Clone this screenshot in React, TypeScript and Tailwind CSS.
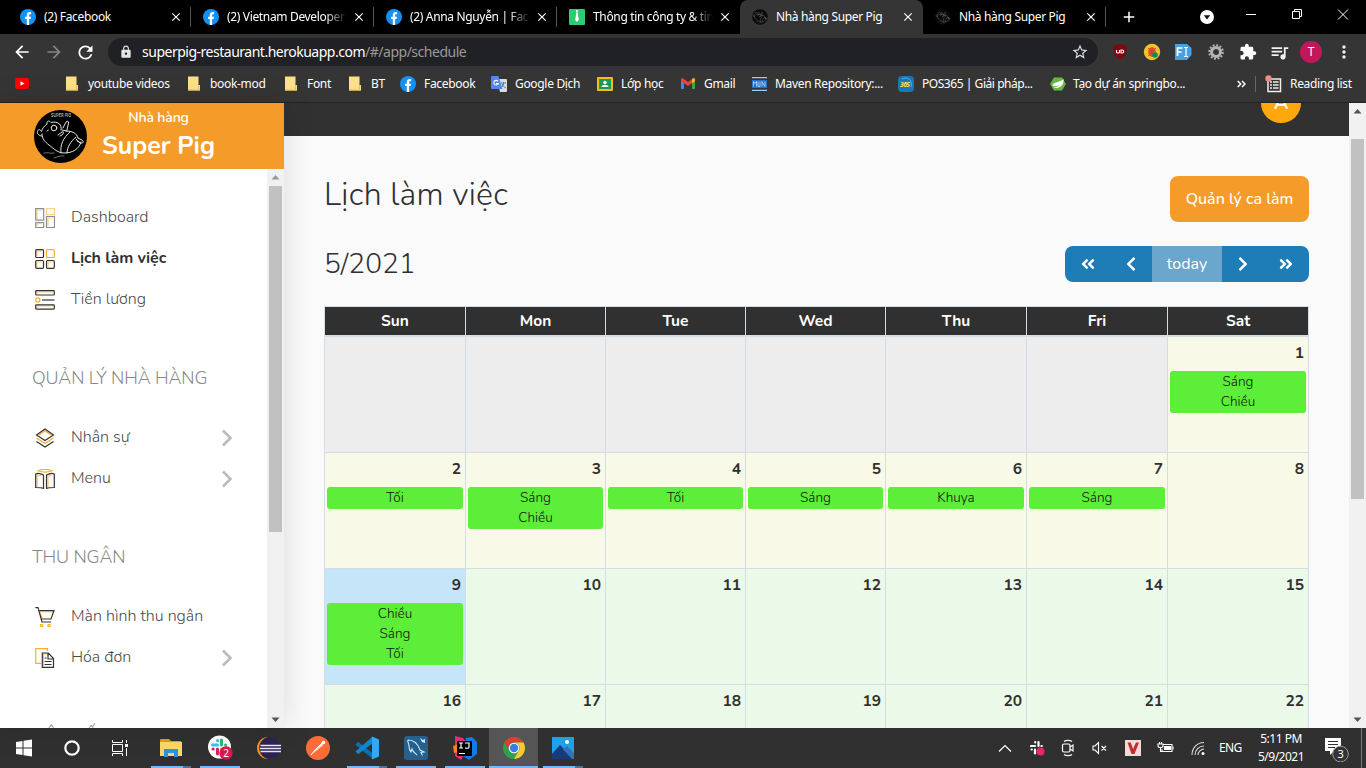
import React from "react";
import { FaAngleDoubleLeft, FaAngleDoubleRight, FaChevronLeft, FaChevronRight } from "react-icons/fa";
import { MdLock, MdOutlineStarBorder, MdArrowBack, MdArrowForward, MdRefresh, MdQueueMusic, MdMoreVert, MdClose, MdAdd, MdExtension } from "react-icons/md";

const Facebook = () => (
  <svg width="16" height="16" viewBox="0 0 16 16" className="shrink-0">
    <circle cx="8" cy="8" r="8" fill="#1491f4" />
    <path d="M6.8 16V10H5V7.7h1.8V6.1c0-2 1.1-3 2.8-3 .7 0 1.5.1 1.5.1v2h-.9c-.9 0-1.1.5-1.1 1.1v1.4H11L10.700 10H9.100v6z" fill="#fff" />
  </svg>
);

const PigLines = ({ stroke }: { stroke: string }) => (
  <g fill="none" stroke={stroke} strokeWidth="1" strokeLinecap="round" strokeLinejoin="round">
    <path d="M8 26c-3 0-5-2-4.500-4.500S6 19 7.500 21.500c.5-3 3-5.500 5.500-7.500-.5-3 2-4 4-1.500 3-.8 6-.5 8.500 1.500 1.500 1.500 2 3.500 1.500 6" />
    <path d="M8 24c0 5 3 8 7 11 5 4 9 8 15 8 9 0 15-4 17-11" />
    <path d="M32 21c6 0 11 2 12 7M44 28l4 2c2 1 1 4-1 3l-4-2M42 29l4 4" />
    <circle cx="20" cy="18" r="2.800" />
    <path d="M13 21l1.500-1M29 18l3-6c1-1 3-1 2.500 1L33 20M24 25l4-3c2-1 2 1 0 3l-2 1M28 20l5 1" />
    <path d="M27 43c-1-8 2-15 9-21M33 43c0-6 4-12 9-16" />
    <path d="M10 43c4-1 7 1 10 0M20 48c4-1 6-3 10-2" strokeWidth=".5" />
  </g>
);

const PigFav = () => (
  <svg width="16" height="16" viewBox="0 0 53 53" className="shrink-0">
    <circle cx="26.500" cy="26.500" r="26" fill="#0a0a0a" />
    <PigLines stroke="#999" />
  </svg>
);

const Tie = () => (
  <svg width="16" height="16" viewBox="0 0 16 16" className="shrink-0">
    <rect width="16" height="16" rx="1" fill="#2dcc70" />
    <path d="M7 1h2l-.4 2.200L9.800 11 8 13 6.200 11l1.200-7.800z" fill="#fff" />
  </svg>
);

const tabs = [
  { title: "(2) Facebook", icon: <Facebook /> },
  { title: "(2) Vietnam Developer", icon: <Facebook />, fade: true },
  { title: "(2) Anna Nguyễn | Face", icon: <Facebook />, fade: true },
  { title: "Thông tin công ty & tin", icon: <Tie />, fade: true },
  { title: "Nhà hàng Super Pig", icon: <PigFav />, active: true },
  { title: "Nhà hàng Super Pig", icon: <PigFav /> },
];

function TabStrip() {
  return (
    <div className="flex h-[34px] bg-black pl-2 text-white">
      {tabs.map((t, i) => (
        <div key={i} className={`relative flex h-[34px] w-[183px] shrink-0 items-center pl-3 ${t.active ? "rounded-t-lg bg-[#353535]" : ""}`}>
          {t.icon}
          <div className={`ml-2 w-[120px] overflow-hidden whitespace-nowrap text-[12px] tracking-[-0.34px] ${t.fade ? "[mask-image:linear-gradient(to_right,black_82%,transparent)]" : ""}`}>{t.title}</div>
          <MdClose size={14} className="ml-[5px] shrink-0" />
          {!t.active && i !== 3 && <div className="absolute right-0 top-[7px] h-[20px] w-px bg-[#555]" />}
        </div>
      ))}
      <div className="flex w-[45px] items-center justify-center"><MdAdd size={18} /></div>
      <div className="ml-[48px] flex items-center">
        <svg width="16" height="16" viewBox="0 0 16 16"><circle cx="8" cy="8" r="7" fill="#fff" /><path d="M4.800 6.200h6.400L8 10.500z" fill="#111" /></svg>
      </div>
      <svg width="148" height="34" viewBox="0 0 148 34" fill="none" stroke="#fff">
        <path d="M31 14.500h10M123 9.500l10 10M133 9.500l-10 10" />
        <path d="M77.500 11.500h7v7h-7zM79.500 11.500v-2h7v7h-2" />
      </svg>
    </div>
  );
}

const Extensions = () => (
  <div className="flex items-center">
    <svg width="16" height="18" viewBox="0 0 16 18"><path d="M8 1l6.500 2c0 7-.5 10-6.500 14C2 13 1.500 10 1.500 3z" fill="#800610" /><path d="M4.500 7v2c0 1.300 3 1.300 3 0V7m1.500 0v3h1.200a1.500 1.500 0 000-3z" fill="none" stroke="#fff" strokeWidth="1.100" /></svg>
    <svg width="18" height="18" viewBox="0 0 18 18" className="ml-[15px]"><circle cx="9" cy="9" r="8.200" fill="#f5c22b" /><ellipse cx="9" cy="9" rx="3.800" ry="4.800" fill="#e2502c" /><path d="M5 5l8 8M13 5l-8 8M9 4v9" stroke="#c4452a" strokeWidth=".8" /><circle cx="12" cy="12" r="2.800" fill="#0b8a5b" /></svg>
    <svg width="17" height="18" viewBox="0 0 17 18" className="ml-[14px]"><path d="M0 1h12l4.500 4v7L12 17H0z" fill="#45a1e0" /><path d="M2.500 13V5h5M2.500 9h4" fill="none" stroke="#fff" strokeWidth="1.700" /><path d="M9 4.500h4M11 4.500v9M9 13.500h4" fill="none" stroke="#fff" strokeWidth="1.200" /></svg>
    <svg width="18" height="18" viewBox="0 0 18 18" className="ml-[15px]" fill="none" stroke="#b5b5b5"><circle cx="9" cy="9" r="4.500" strokeWidth="3" /><circle cx="9" cy="9" r="6.800" strokeWidth="2" strokeDasharray="1.900 1.660" /></svg>
    <MdExtension size={18} className="ml-[14px] text-white" />
    <MdQueueMusic size={21} className="ml-[12px] text-[#f1f1f1]" />
    <div className="ml-[10px] flex size-[22px] items-center justify-center rounded-full bg-[#c2185b] text-[12px] text-white">T</div>
    <MdMoreVert size={20} className="ml-[12px] text-[#f1f1f1]" />
  </div>
);

function Toolbar() {
  return (
    <div className="flex h-[36px] items-center bg-[#353535] pl-[12px] text-white">
      <MdArrowBack size={20} />
      <MdArrowForward size={20} className="ml-[12px] text-[#858585]" />
      <MdRefresh size={21} className="ml-[11px]" />
      <div className="ml-[12px] flex h-[28px] w-[990px] items-center rounded-full bg-[#202124] pl-[11px] pr-[9px]">
        <MdLock size={14} className="text-[#e6e6e6]" />
        <div className="ml-[9px] pb-px text-[14px] tracking-[-0.49px]">superpig-restaurant.herokuapp.com<span className="text-[#9a9a9a]">/#/app/schedule</span></div>
        <MdOutlineStarBorder size={18} className="ml-auto text-[#ddd]" />
      </div>
      <div className="ml-[14px]"><Extensions /></div>
    </div>
  );
}

const Folder = () => (
  <svg width="12" height="15" viewBox="0 0 12 15" className="mr-[10px] shrink-0"><path d="M0 .5h10.500V9H12v5.500H0z" fill="#ffe08a" /><path d="M10.500 9v5.500M0 14h12" stroke="#e8c258" fill="none" /></svg>
);

const bookmarks: { w: string; label: string; icon: React.ReactNode }[] = [
  { w: "w-[51px]", label: "", icon: <svg width="14" height="11" viewBox="0 0 14 11"><rect width="14" height="11" rx="2" fill="#f00" /><path d="M5.500 3.200l4 2.300-4 2.300z" fill="#fff" /></svg> },
  { w: "w-[122px]", label: "youtube videos", icon: <Folder /> },
  { w: "w-[97px]", label: "book-mod", icon: <Folder /> },
  { w: "w-[64px]", label: "Font", icon: <Folder /> },
  { w: "w-[51px]", label: "BT", icon: <Folder /> },
  { w: "w-[91px]", label: "Facebook", icon: <div className="mr-2"><Facebook /></div> },
  { w: "w-[106px]", label: "Google Dịch", icon: <svg width="16" height="16" viewBox="0 0 16 16" className="mr-2 shrink-0"><path d="M6 3h9a1 1 0 011 1v11a1 1 0 01-1 1H9z" fill="#dadce0" /><path d="M10 7h5M12.500 6v1c0 3-1 4-3 5M11 8c1 2 2 3 4 4" stroke="#5f7d9c" fill="none" /><path d="M1 0h6.500l4 13H1a1 1 0 01-1-1V1a1 1 0 011-1z" fill="#4f87ee" /><path d="M7 5.300A2.300 2.300 0 107.300 7.500H5" stroke="#fff" fill="none" strokeWidth="1.100" /></svg> },
  { w: "w-[84px]", label: "Lớp học", icon: <svg width="16" height="14" viewBox="0 0 16 14" className="mr-2 shrink-0"><rect width="16" height="14" rx="1" fill="#f8bc16" /><rect x="2" y="2" width="12" height="10" fill="#179b55" /><circle cx="8" cy="5.500" r="1.700" fill="#fff" /><path d="M4.500 10c0-3 7-3 7 0z" fill="#fff" /></svg> },
  { w: "w-[71px]", label: "Gmail", icon: <svg width="14" height="11" viewBox="0 0 14 11" className="mr-[9px] shrink-0"><path d="M0 1h3v10H1a1 1 0 01-1-1z" fill="#4285f4" /><path d="M11 1h3v9a1 1 0 01-1 1h-2z" fill="#34a853" /><path d="M0 1.500C0 0 1.500 0 2.500.7L7 4 11.500.700C12.500 0 14 0 14 1.500V3L7 8 0 3z" fill="#ea4335" /><path d="M11 1c1.500-1.500 3-.8 3 .5V3l-3 2.200z" fill="#fbbc04" /></svg> },
  { w: "w-[146px]", label: "Maven Repository:...", icon: <svg width="15" height="14" viewBox="0 0 15 14" className="mr-2 shrink-0"><path d="M0 .7h15M0 13.300h15" stroke="#9cc8f5" strokeWidth="1.300" /><rect y="3" width="15" height="8" fill="#236fc9" /><path d="M1.500 9.500v-5l1.500 2 1.500-2v5M6 4.500v5h2v-5M10 9.500v-5l3 5v-5" fill="none" stroke="#bfe0ff" strokeWidth=".8" /></svg> },
  { w: "w-[152px] tracking-[-0.45px]", label: "POS365 | Giải pháp...", icon: <svg width="16" height="16" viewBox="0 0 16 16" className="mr-2 shrink-0"><rect width="16" height="16" rx="4" fill="#1877b8" /><path d="M4 3c5-3 11 1 9 8" stroke="#5bb0e4" fill="none" /><text x="2" y="10.500" fontSize="6.500" fontStyle="italic" fontWeight="700" fill="#ffe04a">365</text></svg> },
  { w: "w-[187px]", label: "Tạo dự án springbo...", icon: <svg width="16" height="16" viewBox="0 0 16 16" className="mr-[7px] shrink-0"><path d="M4 1.500h8l4 6.500-4 6.500H4L0 8z" fill="#66b840" /><path d="M2.500 10C3 5 10 7 13.500 3c.5 7-4 10-10 8.500C7 11 9.500 10 11 8c-2.500 2-5 2.500-8.500 2z" fill="#fff" /></svg> },
];

function Bookmarks() {
  return (
    <div className="flex h-[33px] items-center border-b border-[#222] bg-[#353535] pb-[5px] pl-[15px] text-[12px] tracking-[-0.32px] text-white">
      {bookmarks.map((b, i) => (
        <div key={i} className={`flex shrink-0 items-center whitespace-nowrap ${b.w}`}>{b.icon}{b.label}</div>
      ))}
      <svg width="9" height="8" viewBox="0 0 9 8" fill="none" stroke="#fff" strokeWidth="1.500"><path d="M.7 1l3 3-3 3M5 1l3 3-3 3" /></svg>
      <div className="ml-[9px] h-4 w-px bg-[#666]" />
      <svg width="18" height="18" viewBox="0 0 18 18" className="ml-[9px] shrink-0"><path d="M3 4h12.500v12.500H3z" fill="none" stroke="#eee" strokeWidth="1.500" /><path d="M5 7h2m1 0h5.500M5 10h2m1 0h5.500M5 13h2m1 0h5.500" stroke="#eee" strokeWidth="1.500" /><circle cx="3.500" cy="3.500" r="3.200" fill="#f28b82" /></svg>
      <span className="ml-[7px] whitespace-nowrap">Reading list</span>
    </div>
  );
}

const Y = "#f9ae2b";
const D = "#333";
const navIcons: Record<string, React.ReactNode> = {
  dashboard: <g opacity=".55"><path d="M2 11V2h5M2 18v-2.300h5M13 18V10h5" stroke={Y} /><path d="M.7.700h8v11.500h-8zM.7 14.500h8v5h-8zM11.500 8.500h8v11h-8z" stroke={D} /><path d="M11.500.700h8v6h-8z" stroke={Y} /></g>,
  schedule: <><path d="M2 7V2h5M2 18v-5h5M13 18v-5h5" stroke={Y} opacity=".6" /><rect x=".7" y=".7" width="7.800" height="7.800" rx="1" stroke={D} /><rect x="11.500" y=".7" width="7.800" height="7.800" rx="1" stroke={Y} /><rect x=".7" y="11.500" width="7.800" height="7.800" rx="1" stroke={D} /><rect x="11.500" y="11.500" width="7.800" height="7.800" rx="1" stroke={D} /></>,
  salary: <><path d="M2 4V2h16M2 18v-2h16" stroke={Y} opacity=".6" /><rect x=".7" y=".7" width="18.600" height="4.300" rx=".8" stroke={D} /><rect x=".7" y="14.800" width="18.600" height="4.300" rx=".8" stroke={D} /><circle cx="2.800" cy="10" r="2.100" stroke={Y} /><path d="M7 10h12.500" stroke={D} /></>,
  people: <><path d="M4 7l6-4.200L16 7" stroke={Y} /><path d="M10 1l8.500 6L10 12.500 1.500 7z" stroke={D} /><path d="M1.500 10l8.500 5.500 8.500-5.500" stroke={Y} /><path d="M1.500 13.500L10 19l8.500-5.500" stroke={D} /></>,
  menu: <><path d="M2.200 18V6l4 1M13 18V7l4-1" stroke={Y} opacity=".7" /><path d="M.7 5c2-1 5-.5 7.800 1v13.500c-2-1-5-1-7.800-1zM19.300 5c-2-1-5-.5-7.800 1v13.500c2-1 5-1 7.800-1z" stroke={D} /><path d="M3 1.800c4-1.600 10-1.600 14 0-4 1.400-10 1.400-14 0z" stroke={Y} /></>,
  cart: <><path d="M4.500 4.700h13.500M5 6l2 5" stroke={Y} /><path d="M.3.700H3L7 15h9M4 3.500h15L16 12H6.200" stroke={D} /><circle cx="6.500" cy="18.500" r="1.200" stroke={Y} /><circle cx="14" cy="18.500" r="1.200" stroke={Y} /></>,
  bill: <><path d="M12.500 3V.700H.700v14.600H6" stroke={Y} /><path d="M8.500 18V6H12" stroke={Y} opacity=".7" /><path d="M7.300 5h6l5.200 5.500v8.800H7.300zM13 5v6h5.500M9.500 10h2M9.500 13.500h7M9.500 16.500h7" stroke={D} /></>,
};

function NavItem({ icon, label, bold, arrow }: { icon: string; label: string; bold?: boolean; arrow?: boolean }) {
  return (
    <div className="flex h-[41px] shrink-0 items-center pl-[35px] pr-[34px]">
      <svg width="20" height="20" viewBox="0 0 20 20" fill="none" strokeWidth="1.200" className="mt-[2px] shrink-0">{navIcons[icon]}</svg>
      <span className={`ml-4 text-[16px] whitespace-nowrap ${bold ? "font-bold text-[#303030]" : "font-light text-[#4a4a4a]"}`}>{label}</span>
      {arrow && <svg width="12" height="18" viewBox="0 0 12 18" className="ml-auto mt-[2px]" fill="none" stroke="#bbb" strokeWidth="2.600"><path d="M2 1.500L9.500 9 2 16.500" /></svg>}
    </div>
  );
}

const Heading = ({ children }: { children: React.ReactNode }) => (
  <div className="flex h-[38px] shrink-0 items-center pl-8 pt-[2px] text-[18px] font-light tracking-[-0.12px] text-[#888]">{children}</div>
);

function ScrollBar({ side }: { side?: boolean }) {
  return (
    <div className="flex w-[17px] shrink-0 flex-col items-center bg-[#f1f1f1]">
      <svg width="17" height="17" viewBox="0 0 17 17"><path d="M4.500 10.500h8l-4-4.500z" fill={side ? "#999" : "#555"} /></svg>
      <div className={`w-[13px] bg-[#c1c1c1] ${side ? "h-[346px]" : "mt-[19px] h-[360px]"}`} />
      <svg width="17" height="17" viewBox="0 0 17 17" className="mt-auto"><path d="M4.500 6.500h8l-4 4.500z" fill="#555" /></svg>
    </div>
  );
}

function Sidebar() {
  return (
    <div className="z-10 flex w-[284px] shrink-0 flex-col bg-white font-['Nunito','Lato',sans-serif] shadow-[0_0_30px_rgba(0,0,0,0.13)]">
      <div className="flex h-[66px] shrink-0 items-center bg-[#f49b29] pl-[34px]">
        <svg width="53" height="53" viewBox="0 0 53 53">
          <circle cx="26.500" cy="26.500" r="26.500" fill="#000" />
          <PigLines stroke="#e5e5e5" />
          <text x="17" y="7.300" fontSize="4.800" fontWeight="700" fill="#bbb" textLength="20" lengthAdjust="spacingAndGlyphs">SUPER PIG</text>
        </svg>
        <div className="ml-[15px] flex w-[113px] flex-col items-center whitespace-nowrap text-white">
          <div className="-mt-px text-[14px] font-semibold leading-[20px] tracking-[-0.15px]">Nhà hàng</div>
          <div className="mt-px text-[25px] font-bold leading-[34px]">Super Pig</div>
        </div>
      </div>
      <div className="flex min-h-0 flex-1">
        <div className="flex flex-1 flex-col overflow-hidden pt-[27px]">
          <NavItem icon="dashboard" label="Dashboard" />
          <NavItem icon="schedule" label="Lịch làm việc" bold />
          <NavItem icon="salary" label="Tiền lương" />
          <div className="h-[39px] shrink-0" />
          <Heading>QUẢN LÝ NHÀ HÀNG</Heading>
          <div className="h-[20px] shrink-0" />
          <NavItem icon="people" label="Nhân sự" arrow />
          <NavItem icon="menu" label="Menu" arrow />
          <div className="h-[39px] shrink-0" />
          <Heading>THU NGÂN</Heading>
          <div className="h-[20px] shrink-0" />
          <NavItem icon="cart" label="Màn hình thu ngân" />
          <NavItem icon="bill" label="Hóa đơn" arrow />
          <div className="h-[39px] shrink-0" />
          <Heading>HỆ THỐNG</Heading>
        </div>
        <ScrollBar side />
      </div>
    </div>
  );
}

const events: Record<number, string[]> = { 1: ["Sáng", "Chiều"], 2: ["Tối"], 3: ["Sáng", "Chiều"], 4: ["Tối"], 5: ["Sáng"], 6: ["Khuya"], 7: ["Sáng"], 9: ["Chiều", "Sáng", "Tối"] };
const days = Array.from({ length: 28 }, (_, i) => i - 5);
const cellColor = (d: number) => (d < 1 ? "bg-[#ededed]" : d === 9 ? "bg-[#c5e6f8]" : d < 9 ? "bg-[#f9f9e8]" : "bg-[#eaf9e8]");
const cols = "grid grid-cols-[141px_140px_140px_140px_141px_141px_141px]";

function Calendar() {
  return (
    <div className="mt-[24px] w-[985px] border-r border-[#d5dce3]">
      <div className={`${cols} h-[31px] border-b-2 border-t border-[#d5dce3]`}>
        {["Sun", "Mon", "Tue", "Wed", "Thu", "Fri", "Sat"].map((d) => (
          <div key={d} className="border-l border-[#d5dce3] bg-[#303030] text-center text-[15.500px] font-bold leading-[28px] text-white">{d}</div>
        ))}
      </div>
      <div className={`${cols} auto-rows-[116px]`}>
        {days.map((d) => (
          <div key={d} className={`border-b border-l border-[#d5dce3] px-[2px] ${cellColor(d)}`}>
            <div className="h-[34px] pr-[2px] pt-[4px] text-right text-[15.500px] font-bold leading-6 text-[#303030]">{d > 0 ? d : ""}</div>
            {events[d] && (
              <div className="rounded-[3px] bg-[#5cee38] py-px text-center text-[13.600px] font-light leading-5 text-[#111]">
                {events[d].map((e) => <div key={e}>{e}</div>)}
              </div>
            )}
          </div>
        ))}
      </div>
    </div>
  );
}

function Main() {
  return (
    <div className="flex min-w-0 flex-1 flex-col overflow-hidden bg-[#fafafa] font-['Nunito','Lato',sans-serif]">
      <div className="flex h-[33px] shrink-0 items-end justify-end overflow-hidden bg-[#313131] pr-12">
        <div className="mb-[13px] flex size-10 shrink-0 items-center justify-center rounded-full bg-[#ffa70d] text-[20px] font-semibold text-white">A</div>
      </div>
      <div className="flex flex-col pl-10 pt-10">
        <div className="flex w-[985px] justify-between">
          <h1 className="pt-px text-[32px] font-light leading-[36px] tracking-[0.25px] text-[#303030]">Lịch làm việc</h1>
          <button className="h-[46px] w-[139px] whitespace-nowrap rounded-lg bg-[#f49b29] text-[16px] font-medium text-white">Quản lý ca làm</button>
        </div>
        <div className="mt-6 flex w-[985px] justify-between">
          <h2 className="pt-px text-[28px] font-light leading-[35px] text-[#303030]">5/2021</h2>
          <div className="flex h-[36px] w-[244px] overflow-hidden rounded-lg bg-[#1e7db7] text-white">
            <div className="flex w-[46px] items-center justify-center pb-px"><FaAngleDoubleLeft size={16} /></div>
            <div className="flex w-[41px] items-center justify-center pb-px pr-px"><FaChevronLeft size={16} /></div>
            <div className="w-[70px] bg-[#6ba7cd] text-center text-[16px] leading-[36px]">today</div>
            <div className="flex w-[41px] items-center justify-center pb-px"><FaChevronRight size={16} /></div>
            <div className="flex w-[46px] items-center justify-center pb-px"><FaAngleDoubleRight size={16} /></div>
          </div>
        </div>
        <Calendar />
      </div>
    </div>
  );
}

const apps: { icon: React.ReactNode; open?: boolean; active?: boolean; multi?: boolean }[] = [
  { open: true, multi: true, icon: <svg width="22" height="20" viewBox="0 0 22 20"><path d="M0 2a1 1 0 011-1h8l2 2h10v15H0z" fill="#e3a008" /><path d="M0 4h22v14H0z" fill="#ffd867" /><path d="M4 19v-8h14v8h-4v-4H8v4z" fill="#3292df" /></svg> },
  { open: true, icon: <svg width="26" height="26" viewBox="0 0 26 26"><circle cx="12.500" cy="12" r="11.500" fill="#fff" /><g strokeWidth="3" strokeLinecap="round"><path d="M5.500 10h5M10.500 5.500v.2" stroke="#36c5f0" /><path d="M14.500 5v5M18.500 10h.2" stroke="#2eb67d" /><path d="M10.500 14v5M6 14h.2" stroke="#e01e5a" /><path d="M14.500 14h5" stroke="#ecb22e" /></g><circle cx="19" cy="18" r="6.700" fill="#d9184f" /><text x="16.200" y="22" fill="#fff" fontSize="10">2</text></svg> },
  { icon: <svg width="24" height="24" viewBox="0 0 24 24"><circle cx="11" cy="12" r="11" fill="#f7941e" /><circle cx="13.500" cy="12" r="11.300" fill="#303030" /><circle cx="13.500" cy="12" r="10.500" fill="#2c2255" /><path d="M3.500 9.500h20.500M3 12.500h21M3.500 15.500h20.500" stroke="#e7e5f2" strokeWidth="1.600" /></svg> },
  { icon: <svg width="24" height="24" viewBox="0 0 24 24"><circle cx="12" cy="12" r="12" fill="#ff6c37" /><path d="M5.500 18.500l3-4L16 7.500l1.500 1.500-7.500 6z" fill="#ffd9c9" /><path d="M5 19l4-5 7-7" fill="none" stroke="#fff" /><circle cx="17.500" cy="6.500" r="1.800" fill="#fff" /></svg> },
  { open: true, multi: true, icon: <svg width="24" height="24" viewBox="0 0 24 24"><path d="M3 5.800L18 17.500V23L.5 8.700z" fill="#0872b8" /><path d="M17 1L.5 15.500 3 18.200 18 7z" fill="#1484ce" /><path d="M17 .5l7 3v17l-7 3z" fill="#31a8f0" /></svg> },
  { open: true, icon: <svg width="24" height="24" viewBox="0 0 24 24"><rect width="24" height="24" rx="3" fill="#24618f" /><path d="M4 4c7 0 10 4 12 10l4 2-3 .5 1.500 3M4 4c-1 2 1 3 1 6 0 2 0 4 2 6l1-3c1 3 3 4 5 6" fill="none" stroke="#d7e8f3" strokeWidth="1.100" /><path d="M16 2l3 2 2-1v4l-3-1z" fill="#d7e8f3" /></svg> },
  { open: true, icon: <svg width="24" height="24" viewBox="0 0 24 24"><path d="M2 0l8 2 6 8-8 14-6-4z" fill="#e72b78" /><path d="M0 10l6-2v8l-5 1z" fill="#fc801d" /><path d="M13 2l6-1 5 5v12l-8 6-6-4z" fill="#137be5" /><path d="M4 5h15v15H4z" fill="#000" /><path d="M6 7h4M8 7v5M6 12h4M12 7h4v4c0 2-3 1-4 1M6 17.500h6" fill="none" stroke="#fff" strokeWidth="1.200" /></svg> },
  { open: true, active: true, icon: <svg width="22" height="22" viewBox="0 0 22 22"><circle cx="11" cy="11" r="11" fill="#2ba24c" /><path d="M1.500 5.500A11 11 0 0120.500 5.500H11a5.500 5.500 0 00-4.800 8.200z" fill="#e33b2e" /><path d="M20.500 5.500A11 11 0 0111 22l4.800-8.200A5.500 5.500 0 0011 5.500z" fill="#fcc934" /><circle cx="11" cy="11" r="5.200" fill="#fff" /><circle cx="11" cy="11" r="4.200" fill="#3b7de8" /></svg> },
  { open: true, multi: true, icon: <svg width="22" height="22" viewBox="0 0 22 22"><rect width="22" height="22" fill="#20a0e8" /><path d="M0 17l8-9 14 14H0z" fill="#173b79" /><path d="M11 12.500l4-3.500 7 7v6h-2z" fill="#3770bb" /><circle cx="15" cy="5" r="2" fill="#fff" /></svg> },
];

function Taskbar() {
  return (
    <div className="flex h-[40px] bg-[#303030] font-['Noto_Sans',sans-serif] text-white">
      <div className="flex w-[146px] shrink-0 items-center">
        <svg width="144" height="40" viewBox="0 0 144 40"><path d="M16 14l6.500-1v6.500H16zM23.500 12.800L32 11.500v8h-8.500zM16 20.500h6.500V27L16 26zM23.500 20.500H32v8l-8.500-1.300z" fill="#fff" /><circle cx="72" cy="20" r="6.700" fill="none" stroke="#fff" strokeWidth="2.200" /><g fill="none" stroke="#fff"><path d="M112.500 16.500h10v7h-10zM112.500 12v2.500h10V12M112.500 28v-2.500h10V28M126.500 12v3M126.500 20v8" /></g><path d="M125 16h3v3h-3z" fill="#fff" /></svg>
      </div>
      {apps.map((a, i) => (
        <div key={i} className={`flex w-[49px] shrink-0 flex-col items-center ${a.active ? "bg-[#555]" : ""}`}>
          <div className="flex h-[38px] items-center justify-center pt-[2px]">{a.icon}</div>
          {a.open && <div className={`flex h-[2px] justify-end bg-[#73b9f3] ${a.active ? "w-full" : "w-[40px]"}`}>{a.multi && <div className="w-[8px] bg-[#4c7599]" />}</div>}
        </div>
      ))}
      <div className="ml-auto flex items-center">
        <svg width="14" height="9" viewBox="0 0 14 9" fill="none" stroke="#fff" strokeWidth="1.200"><path d="M1 7.500l6-6 6 6" /></svg>
        <svg width="16" height="16" viewBox="0 0 16 16" className="ml-[17px]"><path d="M2 6h4M6.200 2v.5M9.500 2v4M12.500 6h.3M6 9.500v4M2.500 9.500h.3" stroke="#fff" strokeWidth="2.200" strokeLinecap="round" /><circle cx="11.500" cy="11.500" r="4" fill="#ed2767" /></svg>
        <svg width="14" height="18" viewBox="0 0 14 18" className="ml-[16px]" fill="none" stroke="#fff" strokeWidth="1.200"><rect x="1.500" y="5" width="7.500" height="8" rx="1.500" /><path d="M9 8l3-2v6l-3-2M3 2.500c2-1.500 6-1.500 8 0M3 15.500c2 1.500 6 1.500 8 0" /></svg>
        <svg width="16" height="14" viewBox="0 0 16 14" className="ml-[17px]" fill="none" stroke="#fff" strokeWidth="1.100"><path d="M1 5h2l3.500-3.500v11L3 9H1zM9.500 5l4.500 4.500M14 5L9.500 9.500" /></svg>
        <svg width="16" height="16" viewBox="0 0 16 16" className="ml-[17px]"><rect width="16" height="16" fill="#f3dad8" /><path d="M2.500 2.500h3.300L8 9l3-6.500h3L9.500 14h-3z" fill="#c52d2b" /></svg>
        <svg width="17" height="14" viewBox="0 0 17 14" className="ml-[16px]" fill="none" stroke="#fff" strokeWidth="1.100"><path d="M6 3.500h9v7H5V8" /><path d="M7.500 5.500h6v3h-6z" fill="#fff" /><path d="M16 5.500v3M1 3h5v2c0 2-5 2-5 0zM3.500 7v3.500H5M2.500 1v2M4.500 1v2" /></svg>
        <svg width="15" height="15" viewBox="0 0 15 15" className="ml-[17px]" fill="none" stroke="#ddd" strokeWidth="1.100"><path d="M1 14C1 7 6 1.500 13 1.500M4 14c0-5 4-9 9-9M7 14c0-3 3-6 6-6" /><circle cx="12" cy="12.500" r="1.500" fill="#fff" stroke="none" /></svg>
        <div className="ml-[13px] w-[24px] text-[12px] tracking-[-0.6px]">ENG</div>
        <div className="ml-[14px] w-[48px] whitespace-nowrap text-center text-[12px] leading-[18px] tracking-[-0.5px]"><div>5:11 PM</div><div className="-mx-1">5/9/2021</div></div>
        <svg width="26" height="28" viewBox="0 0 26 28" className="ml-[20px]"><path d="M0 4h16v13H9l-4 4v-4H0z" fill="#fff" /><path d="M3 7.500h10M3 10.500h10M3 13.500h7" stroke="#303030" /><circle cx="15.500" cy="20" r="7.800" fill="#333" stroke="#999" /><text x="12.500" y="24.300" fill="#fff" fontSize="11">3</text></svg>
        <div className="ml-[10px] mr-[4px] h-[40px] w-px bg-[#777]" />
      </div>
    </div>
  );
}

export default function App() {
  return (
    <div className="flex h-[768px] w-[1366px] flex-col overflow-hidden bg-[#353535] font-['Noto_Sans',sans-serif]">
      <TabStrip />
      <Toolbar />
      <Bookmarks />
      <div className="flex min-h-0 flex-1">
        <Sidebar />
        <Main />
        <ScrollBar />
      </div>
      <Taskbar />
    </div>
  );
}
